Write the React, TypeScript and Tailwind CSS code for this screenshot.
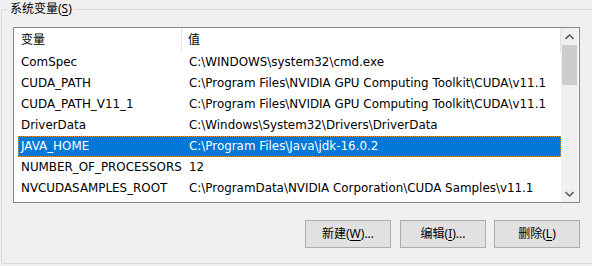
import React from 'react';

const rows = [
  ['ComSpec', 'C:\\WINDOWS\\system32\\cmd.exe'],
  ['CUDA_PATH', 'C:\\Program Files\\NVIDIA GPU Computing Toolkit\\CUDA\\v11.1'],
  ['CUDA_PATH_V11_1', 'C:\\Program Files\\NVIDIA GPU Computing Toolkit\\CUDA\\v11.1'],
  ['DriverData', 'C:\\Windows\\System32\\Drivers\\DriverData'],
  ['JAVA_HOME', 'C:\\Program Files\\Java\\jdk-16.0.2'],
  ['NUMBER_OF_PROCESSORS', '12'],
  ['NVCUDASAMPLES_ROOT', 'C:\\ProgramData\\NVIDIA Corporation\\CUDA Samples\\v11.1'],
];

const selected = 'JAVA_HOME';

function Btn({ label, hot, tail }: { label: string; hot: string; tail: string }) {
  return (
    <button className="flex h-[28px] w-[86px] items-center justify-center border border-[#adadad] bg-[#e1e1e1] text-[12px] text-black">
      {label}(<span className="underline underline-offset-2">{hot}</span>){tail}
    </button>
  );
}

export default function App() {
  return (
    <div
      className="h-[266px] w-[592px] overflow-hidden bg-[#f0f0f0] pt-[9px] pl-[1px] text-[12px] text-black"
      style={{ fontFamily: '"Noto Sans", "Noto Sans CJK SC", sans-serif' }}
    >
      {/* 系统变量 group */}
      <div className="relative h-[255px] w-[620px] border border-[#dcdcdc] pt-[17px] pl-[11px]">
        <span className="absolute -top-[9px] left-[6px] bg-[#f0f0f0] px-[2px] leading-[16px]">
          系统变量(<span className="underline underline-offset-2">S</span>)
        </span>

        {/* list view */}
        <div
          className="flex h-[176px] w-[567px] border border-[#828790] bg-white text-[11.9px]"
          style={{ fontFamily: '"DejaVu Sans", "Noto Sans CJK SC", sans-serif' }}
        >
          <div className="flex w-[547px] flex-col">
            {/* header */}
            <div className="flex h-[24px] items-center text-[12px]">
              <div className="flex h-full w-[168px] items-center border-r border-[#e5e5e5] pl-[7px]">变量</div>
              <div className="flex h-full flex-1 items-center border-r border-[#e5e5e5] pl-[6px]">值</div>
            </div>
            {rows.map(([k, v]) => {
              const sel = k === selected;
              return (
                <div
                  key={k}
                  className={`ml-[4px] flex h-[21px] items-center whitespace-nowrap pt-[1px] ${
                    sel ? 'border border-dotted border-[#e8963a] bg-[#0078d7] text-white' : 'border border-transparent'
                  }`}
                >
                  <div className="w-[170px] pl-[2px]">{k}</div>
                  <div className="flex-1">{v}</div>
                </div>
              );
            })}
          </div>

          {/* scrollbar */}
          <div className="flex w-[17px] flex-col bg-[#f0f0f0]">
            <div className="flex h-[17px] items-center justify-center">
              <svg width="9" height="6" viewBox="0 0 9 6">
                <path d="M0.5 5 L4.5 1 L8.5 5" stroke="#606060" strokeWidth="1.6" fill="none" />
              </svg>
            </div>
            <div className="mx-[1px] h-[40px] bg-[#cdcdcd]" />
            <div className="flex-1" />
            <div className="flex h-[17px] items-center justify-center">
              <svg width="9" height="6" viewBox="0 0 9 6">
                <path d="M0.5 1 L4.5 5 L8.5 1" stroke="#606060" strokeWidth="1.6" fill="none" />
              </svg>
            </div>
          </div>
        </div>

        {/* buttons */}
        <div className="mt-[17px] flex w-[567px] justify-end">
          <Btn label="新建" hot="W" tail="..." />
          <div className="w-[9px]" />
          <Btn label="编辑" hot="I" tail="..." />
          <div className="w-[8px]" />
          <Btn label="删除" hot="L" tail="" />
        </div>
      </div>
    </div>
  );
}
